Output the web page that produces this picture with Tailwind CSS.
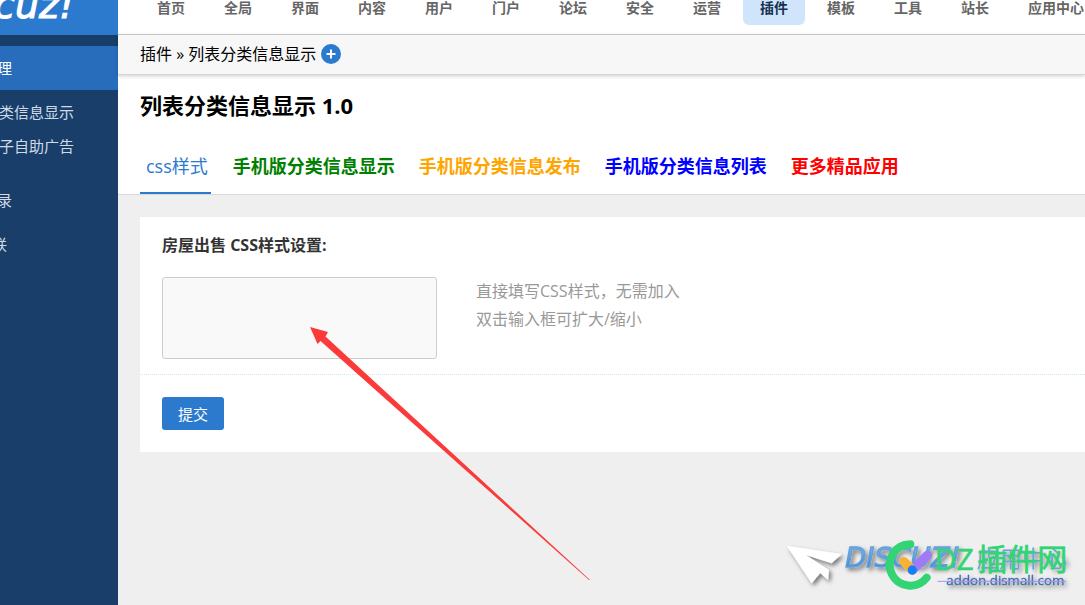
<!DOCTYPE html>
<html lang="zh-CN">
<head>
<meta charset="utf-8">
<title>列表分类信息显示</title>
<script src="https://cdn.jsdelivr.net/npm/@tailwindcss/browser@4"></script>
</head>
<body class="relative flex min-h-screen overflow-hidden bg-[#efefef] font-['Open_Sans','Noto_Sans_CJK_SC',sans-serif] text-[15px] leading-6 text-black">

<aside class="flex w-[118px] shrink-0 flex-col overflow-hidden bg-[#193e69] text-[#cfdae7]">
  <div class="h-[35px] overflow-hidden bg-[#2b7acd]">
    <a href="#" class="-mt-5 -ml-[6px] block font-['DejaVu_Sans'] text-[38px] leading-[50px] italic text-white [-webkit-text-stroke:1px_white]">cuz!</a>
  </div>
  <nav class="mt-[11px] flex flex-col whitespace-nowrap">
    <a href="#" class="-ml-[3px] bg-[#276dbc] py-[10px] text-white">理</a>
    <a href="#" class="-ml-px mt-[10px]">类信息显示</a>
    <a href="#" class="-ml-px mt-[10px]">子自助广告</a>
    <a href="#" class="-ml-[3px] mt-[30px]">录</a>
    <a href="#" class="-ml-2 mt-5">联</a>
  </nav>
</aside>

<div class="flex min-w-0 flex-1 flex-col">
  <header class="h-[35px] overflow-hidden border-b border-[#ccc] bg-white pl-[22px]">
    <nav class="flex gap-[5px] text-sm leading-4 font-bold whitespace-nowrap text-[#666]">
      <a href="#" class="px-[17px] pb-[9px]">首页</a>
      <a href="#" class="px-[17px] pb-[9px]">全局</a>
      <a href="#" class="px-[17px] pb-[9px]">界面</a>
      <a href="#" class="px-[17px] pb-[9px]">内容</a>
      <a href="#" class="px-[17px] pb-[9px]">用户</a>
      <a href="#" class="px-[17px] pb-[9px]">门户</a>
      <a href="#" class="px-[17px] pb-[9px]">论坛</a>
      <a href="#" class="px-[17px] pb-[9px]">安全</a>
      <a href="#" class="px-[17px] pb-[9px]">运营</a>
      <a href="#" class="rounded-b-md bg-[#d0e4fc] px-[17px] pb-[9px] text-[#14304f]">插件</a>
      <a href="#" class="px-[17px] pb-[9px]">模板</a>
      <a href="#" class="px-[17px] pb-[9px]">工具</a>
      <a href="#" class="px-[17px] pb-[9px]">站长</a>
      <a href="#" class="px-[17px] pb-[9px]">应用中心</a>
    </nav>
  </header>

  <div class="z-10 flex h-10 items-center gap-[5px] border-b border-[#d6d6d6] bg-[#f7f7f7] pb-px pl-[22px] shadow-[0_1px_4px_rgba(0,0,0,0.2)]">
    <div class="text-base"><a href="#">插件</a> » <a href="#">列表分类信息显示</a></div>
    <button type="button" aria-label="添加" class="size-5 rounded-full bg-[#2b7acd]">
      <svg viewBox="0 0 20 20" class="size-5" fill="none" stroke="#fff" stroke-width="2"><path d="M10 5.500v9M5.500 10h9"/></svg>
    </button>
  </div>

  <div class="border-b border-[#d9d9d9] bg-white pl-[22px]">
    <h1 class="pt-[14px] text-[22px] leading-8 font-bold">列表分类信息显示 1.0</h1>
    <nav class="mt-[18px] flex gap-3 text-lg leading-7 font-bold whitespace-nowrap">
      <a href="#" class="mr-1 border-b-2 border-[#2b7acd] pt-[13px] pr-[3px] pb-3 pl-[6px] font-normal text-[#2b7acd]">css样式</a>
      <a href="#" class="px-[6px] pt-[13px] text-[#008000]">手机版分类信息显示</a>
      <a href="#" class="px-[6px] pt-[13px] text-[#ffa500]">手机版分类信息发布</a>
      <a href="#" class="px-[6px] pt-[13px] text-[#0000ff]">手机版分类信息列表</a>
      <a href="#" class="px-[6px] pt-[13px] text-[#ff0000]">更多精品应用</a>
    </nav>
  </div>

  <main class="pt-[22px] pl-[22px]">
    <form class="bg-white">
      <div class="border-b border-dotted border-[#cde7f8] px-[22px] pt-4 pb-[15px]">
        <label for="css" class="block text-base font-bold text-[#333]">房屋出售 CSS样式设置:</label>
        <div class="mt-5 flex gap-[39px]">
          <textarea id="css" class="h-[82px] w-[275px] resize-none rounded-[3px] border border-[#ccc] bg-[#f9f9f9] p-1"></textarea>
          <p class="text-base leading-7 text-[#999]">直接填写CSS样式，无需加入<br>双击输入框可扩大/缩小</p>
        </div>
      </div>
      <div class="px-[22px] py-[22px]">
        <button type="submit" class="block h-[33px] rounded-[3px] bg-[#2b7acd] px-4 text-white">提交</button>
      </div>
    </form>
  </main>
</div>

<svg class="pointer-events-none absolute top-[327px] left-[310px] z-20 h-[254px] w-[280px]" viewBox="0 0 280 254" aria-hidden="true">
  <path fill="#fb3a3a" d="M0 0L18 5L15.500 9.500L280 253L279 253L10.500 14L7.500 17Z"/>
</svg>

<svg class="pointer-events-none absolute right-0 bottom-0 h-20 w-[315px]" viewBox="0 0 945 240" role="img" aria-label="DZ插件网 addon.dismall.com">
  <defs>
    <filter id="shade" x="-10%" y="-20%" width="130%" height="160%"><feDropShadow dx="7" dy="8" stdDeviation="6" flood-color="#000" flood-opacity=".5"/></filter>
    <linearGradient id="sky" x1="0" y1="0" x2="0" y2="1"><stop offset="0.300" stop-color="#74abe0"/><stop offset="1" stop-color="#3c7cc0"/></linearGradient>
  </defs>
  <g filter="url(#shade)">
    <path fill="#fff" d="M50 62L215 87L185 115L108 90L177 135L174 165L151 144L125 175Z"/>
    <text x="226" y="126" font-family="DejaVu Sans" font-style="italic" font-size="82" stroke="#62a0dc" stroke-width="4" fill="url(#sky)">DISCUZ!</text>
    <text x="620" y="126" font-family="Noto Sans CJK SC" font-size="68" fill="#6ba3dc">应用中心</text>
    <text x="529" y="180" font-family="Open Sans" font-size="40" fill="#3f72ae" stroke="#3f72ae">addon.dismall.com</text>
  </g>
  <path stroke="#a98bf5" stroke-width="3" d="M503 169H888"/>
  <g fill="none" stroke-linecap="round">
    <path stroke="#32d474" stroke-width="24" d="M421 58A62 62 0 1 0 470 158"/>
    <path stroke="#a07af8" stroke-width="28" d="M427 135L472 91"/>
    <path stroke="#f7b135" stroke-width="28" d="M427 135L402 110"/>
    <path stroke="#147efb" stroke-width="28" d="M427 135h.1"/>
  </g>
  <text y="134" font-family="Open Sans, Noto Sans CJK SC" font-size="90" fill="#32d474" stroke="#32d474" stroke-width="2"><tspan x="494">DZ</tspan><tspan x="622">插件网</tspan></text>
</svg>
</body>
</html>
